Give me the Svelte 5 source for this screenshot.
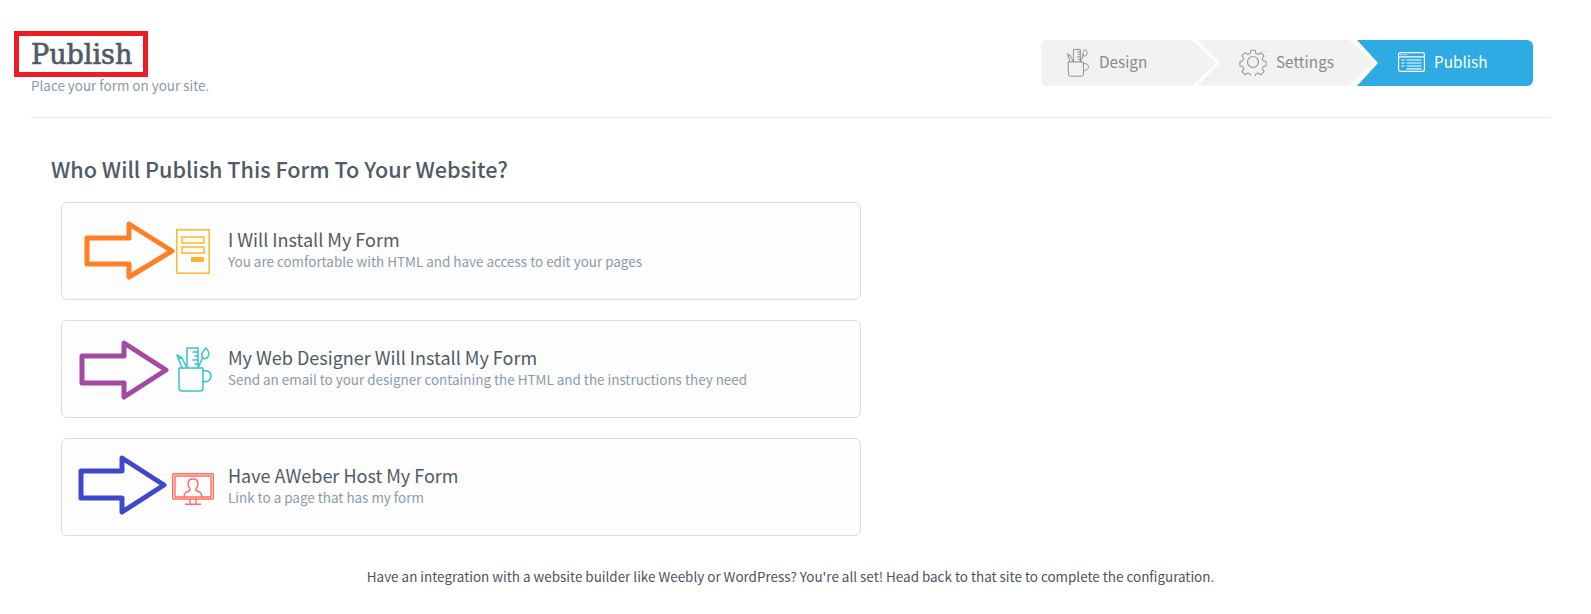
<script>
  const options = [
    { title: 'I Will Install My Form', text: 'You are comfortable with HTML and have access to edit your pages', icon: 'form' },
    { title: 'My Web Designer Will Install My Form', text: 'Send an email to your designer containing the HTML and the instructions they need', icon: 'mug' },
    { title: 'Have AWeber Host My Form', text: 'Link to a page that has my form', icon: 'monitor' }
  ];

  const arrows = [
    { color: '#ff7f27', d: 'M87 238H129V224L172 251L129 277V264H87Z' },
    { color: '#a349a4', d: 'M82 356H124V343L166 370L124 397V383H82Z' },
    { color: '#3f48cc', d: 'M81 471H122V458L164 485L122 512V498H81Z' }
  ];
</script>

{#snippet mug()}
  <svg class="ico" viewBox="0 0 37 46" width="37" height="46" fill="none" stroke="currentColor" stroke-width="1.500" stroke-linejoin="round" stroke-linecap="round">
    <path d="M4 22h24v20a3 3 0 0 1-3 3H7a3 3 0 0 1-3-3z" />
    <path d="M28 25c5-1 8 1 8 5s-3 6-8 6" />
    <path d="M12 22V2h11v20" />
    <path d="M18 6h5M20 10h3M18 14h5M20 18h3" />
    <path d="M7 22L2 9l5 3 5 10" />
    <path d="M3.500 13l3.500-1.500" />
    <path d="M23 22l5-11" />
    <path d="M27 11c-1-3 1-6 4-9 3 3 4 7 1 10-2 1-4 1-5-1z" />
  </svg>
{/snippet}

{#snippet gear()}
  <svg class="ico" viewBox="0 0 28 28" width="28" height="28" fill="none" stroke="#999" stroke-width="1.200" stroke-linejoin="round">
    <circle cx="14" cy="14" r="5.500" />
    <path d="M11.500 1h5l.7 3.600 2.600 1.100 3-2.100 3.500 3.500-2.100 3 1.100 2.600 3.200.7v5l-3.200.7-1.100 2.600 2.100 3-3.500 3.500-3-2.100-2.600 1.100-.7 3.200h-5l-.7-3.200-2.600-1.100-3 2.100-3.500-3.500 2.100-3-1.100-2.600-3.200-.7v-5l3.200-.7 1.100-2.600-2.100-3 3.500-3.500 3 2.100 2.600-1.100z" transform="translate(1.400 1.400) scale(.9)" />
  </svg>
{/snippet}

{#snippet browser()}
  <svg class="ico" viewBox="0 0 27 20" width="27" height="20" fill="none" stroke="currentColor" stroke-width="1.200">
    <rect x=".6" y=".6" width="25.800" height="18.800" rx="2" />
    <path d="M.6 4.800h25.800" />
    <path d="M2.500 2.600h1.200M5 2.600h1.200M7.500 2.600h1.200" />
    <path d="M3.500 8h3M8.500 8h15M3.500 11h3M8.500 11h15M3.500 14h3M8.500 14h15M8.500 16.800h15" />
  </svg>
{/snippet}

{#snippet form()}
  <svg class="ico" viewBox="0 0 34 45" width="34" height="45" fill="none" stroke="currentColor" stroke-width="1.500">
    <rect x=".8" y=".8" width="32.400" height="43.400" />
    <rect x="6" y="8" width="22" height="6" />
    <rect x="6" y="18" width="22" height="6" />
    <rect x="15" y="28" width="13" height="5" fill="currentColor" stroke="none" />
  </svg>
{/snippet}

{#snippet monitor()}
  <svg class="ico" viewBox="0 0 42 32" width="42" height="32" fill="none" stroke="currentColor" stroke-width="1.400" stroke-linejoin="round">
    <rect x=".7" y=".7" width="40.600" height="25.300" rx="1" />
    <rect x="3" y="3" width="36" height="21" />
    <path d="M18 26v5M24 26v5M13 31.300h16" />
    <path d="M12 24c0-4 2-5 6-6.500v-2c-1.500-1-2-3-2-5 0-3 2-4.500 5-4.500s5 1.500 5 4.500c0 2-.5 4-2 5v2c4 1.500 6 2.500 6 6.500" />
  </svg>
{/snippet}

<div class="page">
  <header class="top">
    <div class="heading">
      <h1>Publish</h1>
      <p>Place your form on your site.</p>
    </div>
    <nav class="steps">
      <div class="step design">{@render mug()}<span>Design</span></div>
      <div class="step settings">{@render gear()}<span>Settings</span></div>
      <div class="step publish">{@render browser()}<span>Publish</span></div>
    </nav>
  </header>

  <main class="content">
    <h2>Who Will Publish This Form To Your Website?</h2>
    <div class="cards">
      {#each options as option}
        <div class="card">
          <div class="card-icon {option.icon}">
            {#if option.icon === 'form'}
              {@render form()}
            {:else if option.icon === 'mug'}
              {@render mug()}
            {:else}
              {@render monitor()}
            {/if}
          </div>
          <div class="card-text">
            <h3>{option.title}</h3>
            <p>{option.text}</p>
          </div>
        </div>
      {/each}
    </div>
    <p class="note">Have an integration with a website builder like Weebly or WordPress? You're all set! Head back to that site to complete the configuration.</p>
  </main>

  <div class="red-box"></div>
  <svg class="arrows" width="1591" height="614" fill="none" stroke-width="5" stroke-linejoin="round">
    {#each arrows as arrow}
      <path d={arrow.d} stroke={arrow.color} />
    {/each}
  </svg>
</div>

<style>
  :global(body) {
    margin: 0;
    background: #fff;
    font-family: "Noto Sans CJK SC", "Noto Sans", sans-serif;
    color: #4a5560;
  }

  .page {
    position: relative;
    height: 614px;
    overflow: hidden;
    box-sizing: border-box;
    padding: 0 41px 0 31px;
  }

  .top {
    display: flex;
    justify-content: space-between;
    align-items: flex-start;
    height: 77px;
    border-bottom: 1px solid #e8e8e8;
    padding-top: 40px;
  }

  h1 {
    margin: -3px 0 0;
    font-family: "DejaVu Serif", serif;
    font-weight: 400;
    font-size: 27px;
    line-height: 36px;
    color: #4f5b66;
    -webkit-text-stroke: 0.7px #4f5b66;
  }

  .heading p {
    margin: 3px 0 0;
    font-size: 13.450px;
    line-height: 19px;
    color: #8a9ba8;
  }

  .steps {
    display: flex;
    height: 46px;
    margin-right: 17px;
  }

  .step {
    display: flex;
    align-items: center;
    width: 178px;
    height: 46px;
    box-sizing: border-box;
    padding-bottom: 2px;
    background: #f2f2f2;
    color: #8a8a8a;
    font-size: 15.300px;
  }

  .step span {
    padding-bottom: 2px;
  }

  .step.design {
    gap: 10px;
    padding-left: 25px;
    border-radius: 6px 0 0 6px;
    clip-path: polygon(0 0, 151px 0, 175px 50%, 151px 100%, 0 100%);
  }

  .step.settings {
    gap: 9px;
    margin-left: -22px;
    padding-left: 42px;
    clip-path: polygon(0 0, 152px 0, 177px 50%, 152px 100%, 0 100%, 23px 50%);
  }

  .step.publish {
    width: 176px;
    gap: 9px;
    margin-left: -18px;
    padding-left: 41px;
    background: #2dabe2;
    color: #fff;
    border-radius: 0 6px 6px 0;
    clip-path: polygon(0 0, 100% 0, 100% 100%, 0 100%, 21px 50%);
  }

  .step.design .ico {
    width: 23px;
    height: 29px;
  }

  .ico {
    flex: none;
    display: block;
  }

  .content {
    padding-top: 35px;
  }

  h2 {
    margin: 0 0 17px 20px;
    font-size: 21.600px;
    line-height: 32px;
    font-weight: 500;
    color: #4f5b66;
  }

  .cards {
    display: flex;
    flex-direction: column;
    gap: 20px;
    margin-left: 30px;
    width: 800px;
  }

  .card {
    display: flex;
    align-items: center;
    gap: 12px;
    height: 98px;
    box-sizing: border-box;
    padding-left: 108px;
    background: #fdfdfd;
    border: 1px solid #dcdcdc;
    border-radius: 6px;
  }

  .card-icon {
    width: 46px;
    display: flex;
    justify-content: center;
  }

  .card-icon.form {
    color: #ffb62b;
  }

  .card-icon.mug {
    color: #35c4cc;
  }

  .card-icon.monitor {
    color: #ff6b5e;
    padding-top: 4px;
  }

  .card-text {
    padding-bottom: 5px;
  }

  h3 {
    margin: 0;
    font-size: 18px;
    line-height: 24px;
    font-weight: 400;
    color: #4f5b66;
  }

  .card-text p {
    margin: 0;
    font-size: 13.450px;
    line-height: 20px;
    color: #8a9ba8;
  }

  .note {
    margin: 30px 0 0;
    text-align: center;
    font-size: 13.450px;
    line-height: 20px;
    color: #4a5560;
  }

  .red-box {
    position: absolute;
    left: 14px;
    top: 31px;
    width: 134px;
    height: 46px;
    box-sizing: border-box;
    border: 5px solid #ed1c24;
  }

  .arrows {
    position: absolute;
    left: 0;
    top: 0;
    pointer-events: none;
  }
</style>
